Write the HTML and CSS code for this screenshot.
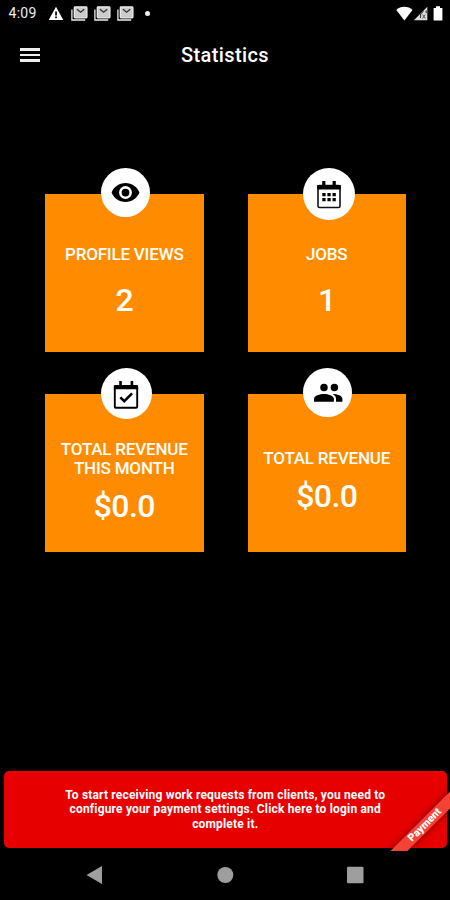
FILE: index.html
```html
<!DOCTYPE html>
<html lang="en">
<head>
  <meta charset="UTF-8">
  <title>Statistics</title>
  <link rel="stylesheet" href="styles.css">
</head>
<body>
  <svg class="defs">
    <symbol id="gallery" viewBox="0 0 17 15">
      <path d="M.9 3.5v10.5h13.3" fill="none" stroke="#eee" stroke-width="1.3"/>
      <rect x="3.3" y="0.9" width="12.6" height="10.9" rx=".8" fill="#ccc" stroke="#eee" stroke-width="1.3"/>
      <path d="M6 3.2l3.6 3 3.6-3" fill="none" stroke="#333" stroke-width="1.4"/>
    </symbol>
  </svg>

  <div class="status-bar">
    <span class="clock">4:09</span>
    <svg class="warning" width="16" height="15" viewBox="0 0 16 15"><path d="M8 .8L15.3 14H.7z" fill="#fff"/><path d="M7.2 5.5h1.7v4H7.2zM7.2 10.5h1.7v1.7H7.2z" fill="#000"/></svg>
    <svg class="mail" width="17" height="15"><use href="#gallery"/></svg>
    <svg class="mail" width="17" height="15"><use href="#gallery"/></svg>
    <svg class="mail" width="17" height="15"><use href="#gallery"/></svg>
    <span class="dot"></span>
    <div class="system">
      <svg width="17" height="15" viewBox="0 0 17 15"><path d="M8.4 14.5L.3 4Q3.6.7 8.4.7T16.5 4z" fill="#fff"/></svg>
      <svg width="16" height="15" viewBox="0 0 16 15"><path d="M14.3.7v13.6H.8z" fill="#ddd"/><path d="M13.2 4.5v2.6M7.6 12V8l3-2.8" stroke="#222" stroke-width="1" fill="none"/><path d="M9.5 8.5l2.8 4M12.3 8.5l-2.8 4" stroke="#555" stroke-width="1"/></svg>
      <svg width="12" height="15" viewBox="0 0 12 15"><path d="M4 .2h4v1.8h2.4v12.6H1.6V2H4z" fill="#fff"/></svg>
    </div>
  </div>

  <header>
    <button class="menu" aria-label="Menu"><span></span><span></span><span></span></button>
    <h1>Statistics</h1>
  </header>

  <main>
    <div class="card">
      <div class="badge">
        <svg width="31" height="31" viewBox="0 0 24 24"><path d="M12 4.7C7 4.7 2.9 7.7 1.2 12c1.7 4.3 5.8 7.3 10.8 7.3s9.1-3 10.8-7.3C21.1 7.7 17 4.7 12 4.7zM12 17a5 5 0 1 1 0-10 5 5 0 0 1 0 10zm0-8a3 3 0 1 0 0 6 3 3 0 0 0 0-6z"/></svg>
      </div>
      <h2>PROFILE VIEWS</h2>
      <p class="value">2</p>
    </div>
    <div class="card">
      <div class="badge large">
        <svg width="26" height="30" viewBox="0 0 26 30"><rect x="2" y="6.5" width="22" height="22" rx="1.5" fill="none" stroke="#111" stroke-width="1.6"/><path d="M1.2 6h23.6v4.5H1.2zM6.2 2h3.2v5H6.2zM16.6 2h3.2v5h-3.2z"/><path d="M6.3 14h3.3v3.2H6.3zM11.4 14h3.3v3.2h-3.3zM16.5 14h3.3v3.2h-3.3zM6.3 19h3.3v3.2H6.3zM11.4 19h3.3v3.2h-3.3zM16.5 19h3.3v3.2h-3.3z"/></svg>
      </div>
      <h2>JOBS</h2>
      <p class="value">1</p>
    </div>
    <div class="card two-line">
      <div class="badge medium">
        <svg width="26" height="30" viewBox="0 0 26 30"><rect x="1.8" y="7" width="22.4" height="21.8" rx="1" fill="none" stroke="#000" stroke-width="1.9"/><path d="M.9 6.3h24.2v4H.9zM6.2 2h2.6v5H6.2zM17.6 2h2.6v5h-2.6z"/><path d="M7.3 18.3l4 3.9 7.8-7.8" fill="none" stroke="#000" stroke-width="2.5"/></svg>
      </div>
      <h2>TOTAL REVENUE<br>THIS MONTH</h2>
      <p class="value">$0.0</p>
    </div>
    <div class="card revenue">
      <div class="badge">
        <svg width="32" height="32" viewBox="0 0 24 24"><circle cx="9" cy="7.8" r="2.8"/><circle cx="16.8" cy="7.8" r="2.8"/><path d="M1.5 18.6v-2.2c0-2.5 4.7-3.6 7.5-3.6s7.4 1.1 7.4 3.6v2.2zM15.5 12.8c3.3 0 7.3 1.2 7.3 3.6v2.2H18v-2.2c0-1.7-1-2.7-2.5-3.6z"/></svg>
      </div>
      <h2>TOTAL REVENUE</h2>
      <p class="value">$0.0</p>
    </div>
  </main>

  <div class="notice">
    <p>To start receiving work requests from clients, you need to<br>configure your payment settings. Click here to login and<br>complete it.</p>
    <div class="corner"><span class="ribbon">Payment</span></div>
  </div>

  <nav>
    <svg width="18" height="20" viewBox="0 0 18 20"><path d="M.5 10L16 1v18z"/></svg>
    <svg width="18" height="20" viewBox="0 0 18 20"><circle cx="9.3" cy="10" r="8"/></svg>
    <svg width="18" height="20" viewBox="0 0 18 20"><rect x="1" y="1.8" width="16.5" height="16.5" rx="1"/></svg>
  </nav>
</body>
</html>
```

FILE: styles.css
```css
* { box-sizing: border-box; }
body {
  display: flex;
  flex-direction: column;
  height: 900px;
  margin: 0;
  background: #000;
  color: #fff;
  font-family: Roboto, sans-serif;
  overflow: hidden;
}
h1, h2, p { margin: 0; }
.defs {
  position: absolute;
  width: 0;
  height: 0;
}
.status-bar {
  display: flex;
  align-items: center;
  height: 26px;
  padding: 0 6px 0 8.5px;
}
.clock {
  width: 39.5px;
  font-size: 14px;
  line-height: 26px;
  letter-spacing: 0.3px;
  color: #eee;
}
.warning { margin-right: 7px; }
.mail { margin-right: 6px; }
.dot {
  width: 5px;
  height: 5px;
  margin-left: 5px;
  border-radius: 50%;
  background: #eee;
}
.system {
  display: flex;
  margin-left: auto;
}
.system svg:last-child { margin-left: 3px; }
header {
  display: grid;
  grid-template-columns: 60px 1fr 60px;
  align-items: center;
  height: 58px;
}
header h1 {
  font-size: 20px;
  font-weight: 500;
  line-height: 24px;
  letter-spacing: 0.4px;
  text-align: center;
}
.menu {
  display: flex;
  flex-direction: column;
  gap: 3px;
  width: 20px;
  margin-left: 20px;
  padding: 0;
  border: none;
  background: none;
}
.menu span {
  width: 19.5px;
  height: 2.5px;
  background: #eee;
}
main {
  flex: 1;
  display: grid;
  grid-template-columns: 158.5px 158.5px;
  grid-auto-rows: 158px;
  gap: 42px 44px;
  padding: 110px 45px 0;
}
.card {
  position: relative;
  padding-top: 51px;
  background: #ff8c00;
  text-align: center;
}
.badge {
  position: absolute;
  top: -26px;
  left: 55.5px;
  display: flex;
  align-items: center;
  justify-content: center;
  width: 49px;
  height: 49px;
  border-radius: 50%;
  background: #fff;
}
.badge.large {
  width: 52px;
  height: 52px;
}
.badge.medium {
  width: 51px;
  height: 51px;
}
.card h2 {
  font-size: 17px;
  font-weight: 500;
  line-height: 19px;
  letter-spacing: -0.2px;
}
.value {
  margin-top: 17px;
  font-size: 32px;
  font-weight: 500;
  line-height: 38px;
  letter-spacing: -0.6px;
}
.two-line { padding-top: 46px; }
.two-line .value { margin-top: 9px; }
.revenue { padding-top: 55px; }
.revenue .value { margin-top: 9px; }
.notice {
  position: relative;
  height: 77.5px;
  margin: 0 3px 0 3.5px;
  padding-top: 17px;
  border-radius: 5px;
  background: #e60000;
  text-align: center;
}
.notice p {
  font-size: 12px;
  font-weight: 700;
  line-height: 14.7px;
  letter-spacing: 0.18px;
}
.corner {
  position: absolute;
  right: -3px;
  bottom: -3px;
  width: 80px;
  height: 80px;
  overflow: hidden;
}
.ribbon {
  position: absolute;
  left: -5.5px;
  top: 48px;
  width: 120px;
  height: 12.4px;
  background: #f44336;
  box-shadow: 0 0 6px rgba(0, 0, 0, 0.5);
  font-size: 10.5px;
  font-weight: 900;
  line-height: 12.4px;
  transform: rotate(-45deg);
}
nav {
  display: flex;
  justify-content: space-between;
  height: 52px;
  padding: 17px 86px 0;
}
nav svg { fill: #9e9e9e; }
```
